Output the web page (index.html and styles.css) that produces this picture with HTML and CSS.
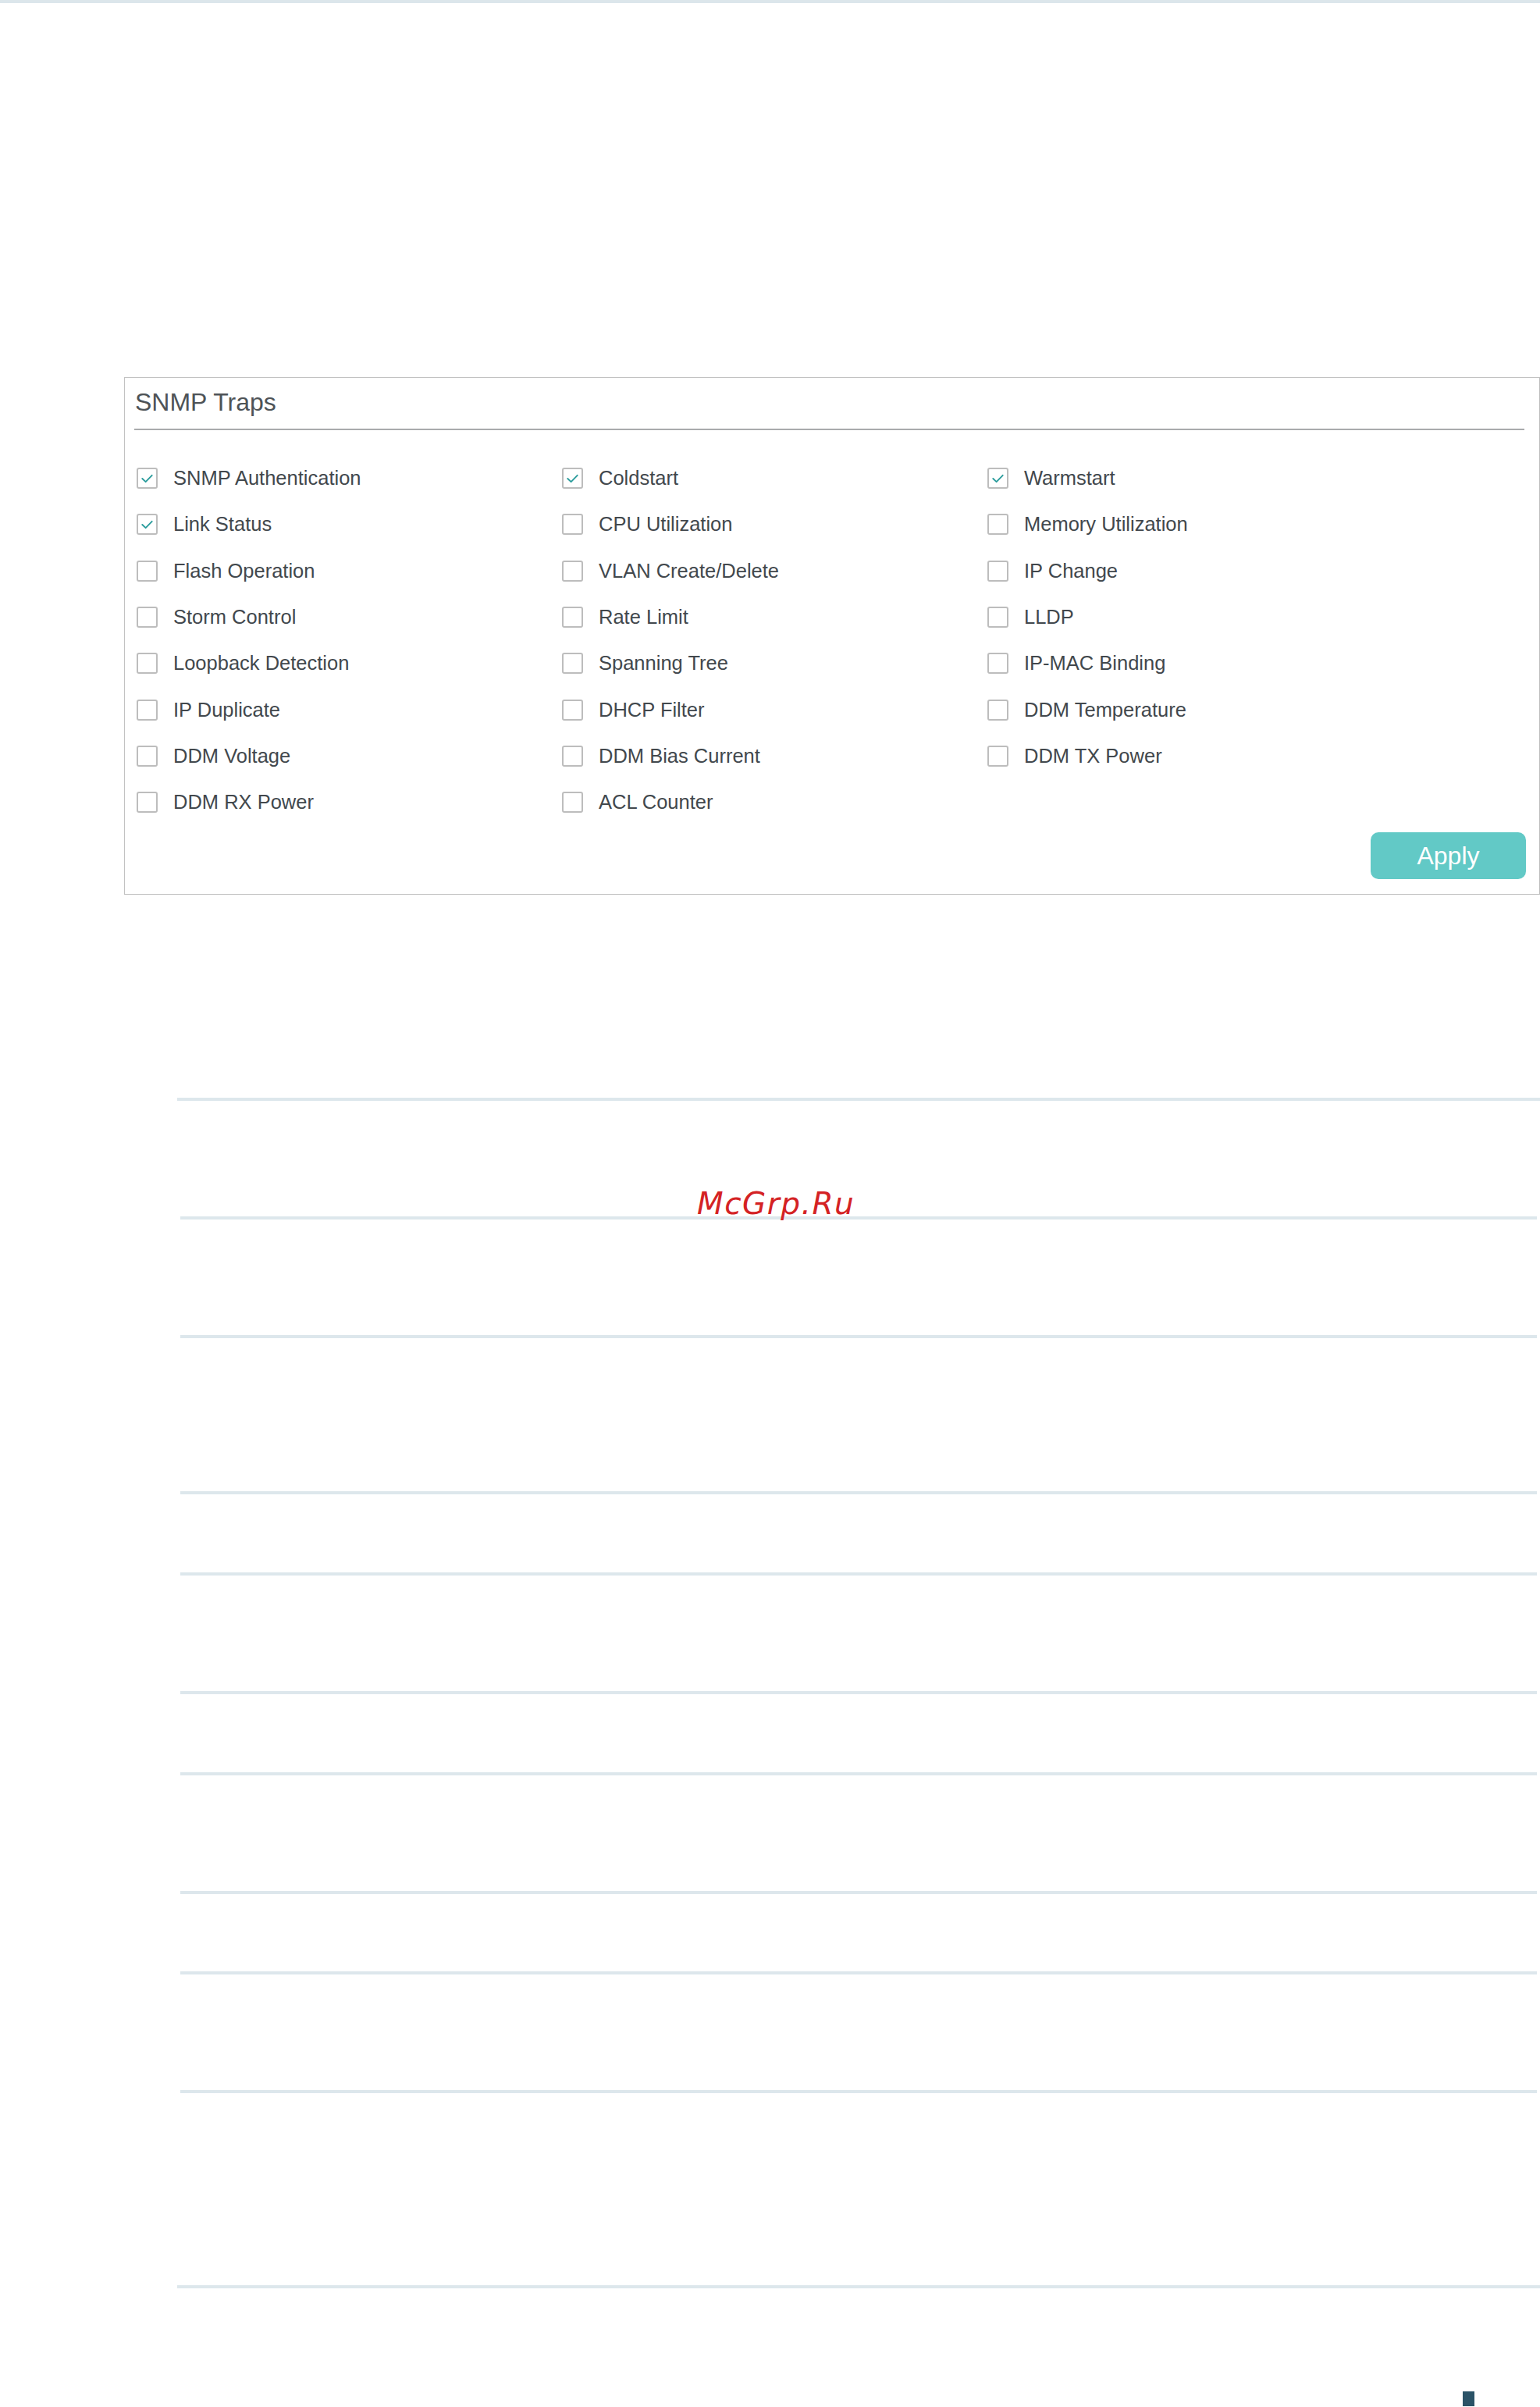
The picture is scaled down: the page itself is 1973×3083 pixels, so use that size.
FILE: index.html
```html
<!DOCTYPE html>
<html lang="en">
<head>
    <meta charset="UTF-8">
    <meta name="viewport" content="width=device-width, initial-scale=1.0">
    <title>SNMP Traps</title>
    <link rel="stylesheet" href="styles.css">
</head>
<body>
    <div class="topbar"></div>

    <div class="panel">
        <div class="panel-title">SNMP Traps</div>
        <div class="traps">
            <label class="trap"><span class="box checked"><svg viewBox="0 0 26 26"><path d="M7 13.5 L11.2 17.5 L19 9.5"/></svg></span>SNMP Authentication</label>
            <label class="trap"><span class="box checked"><svg viewBox="0 0 26 26"><path d="M7 13.5 L11.2 17.5 L19 9.5"/></svg></span>Coldstart</label>
            <label class="trap"><span class="box checked"><svg viewBox="0 0 26 26"><path d="M7 13.5 L11.2 17.5 L19 9.5"/></svg></span>Warmstart</label>

            <label class="trap"><span class="box checked"><svg viewBox="0 0 26 26"><path d="M7 13.5 L11.2 17.5 L19 9.5"/></svg></span>Link Status</label>
            <label class="trap"><span class="box"></span>CPU Utilization</label>
            <label class="trap"><span class="box"></span>Memory Utilization</label>

            <label class="trap"><span class="box"></span>Flash Operation</label>
            <label class="trap"><span class="box"></span>VLAN Create/Delete</label>
            <label class="trap"><span class="box"></span>IP Change</label>

            <label class="trap"><span class="box"></span>Storm Control</label>
            <label class="trap"><span class="box"></span>Rate Limit</label>
            <label class="trap"><span class="box"></span>LLDP</label>

            <label class="trap"><span class="box"></span>Loopback Detection</label>
            <label class="trap"><span class="box"></span>Spanning Tree</label>
            <label class="trap"><span class="box"></span>IP-MAC Binding</label>

            <label class="trap"><span class="box"></span>IP Duplicate</label>
            <label class="trap"><span class="box"></span>DHCP Filter</label>
            <label class="trap"><span class="box"></span>DDM Temperature</label>

            <label class="trap"><span class="box"></span>DDM Voltage</label>
            <label class="trap"><span class="box"></span>DDM Bias Current</label>
            <label class="trap"><span class="box"></span>DDM TX Power</label>

            <label class="trap"><span class="box"></span>DDM RX Power</label>
            <label class="trap"><span class="box"></span>ACL Counter</label>
        </div>
        <div class="actions">
            <button type="button" class="btn-apply">Apply</button>
        </div>
    </div>

    <div class="table">
        <div class="row row-first h152"><span class="watermark">McGrp.Ru</span></div>
        <div class="row h152"></div>
        <div class="row h200"></div>
        <div class="row h104"></div>
        <div class="row h152"></div>
        <div class="row h104"></div>
        <div class="row h152"></div>
        <div class="row h103"></div>
        <div class="row h152"></div>
        <div class="row h250"></div>
        <div class="row row-last"></div>
    </div>

    <div class="footer">
        <span class="page-mark"></span>
    </div>
</body>
</html>
```

FILE: styles.css
```css
body {
    margin: 0;
    font-family: 'Liberation Sans', Arial, sans-serif;
    color: #42484d;
    background: #fff;
    overflow: hidden;
}

.topbar {
    height: 4px;
    background-color: #dce6eb;
}

.panel {
    margin: 479px 0 0 159px;
    border: 1px solid #c2c2c2;
    border-right-color: #bdbdbd;
}

.panel-title {
    margin: 0 19px 0 12px;
    padding: 13px 0 16px 1px;
    font-size: 32px;
    line-height: 36px;
    color: #4e5357;
    border-bottom: 2px solid #a9abad;
}

.traps {
    display: grid;
    grid-template-columns: 545px 545px 1fr;
    grid-auto-rows: 59.3px;
    margin-top: 32px;
    padding-left: 15px;
}

.trap {
    display: flex;
    align-items: center;
    gap: 20px;
    font-size: 25.5px;
    color: #42484d;
}

.box {
    box-sizing: border-box;
    width: 27px;
    height: 27px;
    border: 2px solid #bdbdbd;
    border-radius: 3px;
    flex-shrink: 0;
    position: relative;
}

.box svg {
    position: absolute;
    left: -2px;
    top: -2px;
    width: 27px;
    height: 27px;
}

.box svg path {
    fill: none;
    stroke: #2a9c9c;
    stroke-width: 1.8;
    stroke-linecap: round;
    stroke-linejoin: round;
}

.actions {
    display: flex;
    justify-content: flex-end;
    padding: 9px 17px 19px 0;
}

.btn-apply {
    width: 199px;
    height: 60px;
    border: none;
    border-radius: 10px;
    background-color: #62c9c6;
    color: #fff;
    font-family: 'Liberation Sans', Arial, sans-serif;
    font-size: 32px;
    padding: 0;
    cursor: pointer;
}

.table {
    margin: 260px 0 0 231px;
}

.row {
    box-sizing: border-box;
    border-top: 4px solid #dde7ec;
    margin-right: 4px;
}

.row-first,
.row-last {
    margin-left: -4px;
    margin-right: 0;
}

.row-last {
    height: 4px;
}

.h152 { height: 152px; }
.h200 { height: 200px; }
.h104 { height: 104px; }
.h103 { height: 103px; }
.h250 { height: 250px; }

.row-first {
    display: flex;
    align-items: flex-end;
    padding-left: 666px;
}

.watermark {
    font-family: 'DejaVu Sans', sans-serif;
    font-style: italic;
    font-size: 39px;
    line-height: 39px;
    letter-spacing: 1.5px;
    color: #d42224;
    margin-bottom: -3px;
}

.footer {
    padding: 132px 0 0 1874px;
    height: 19px;
}

.page-mark {
    display: block;
    width: 15px;
    height: 19px;
    background-color: #2b5367;
}
```
